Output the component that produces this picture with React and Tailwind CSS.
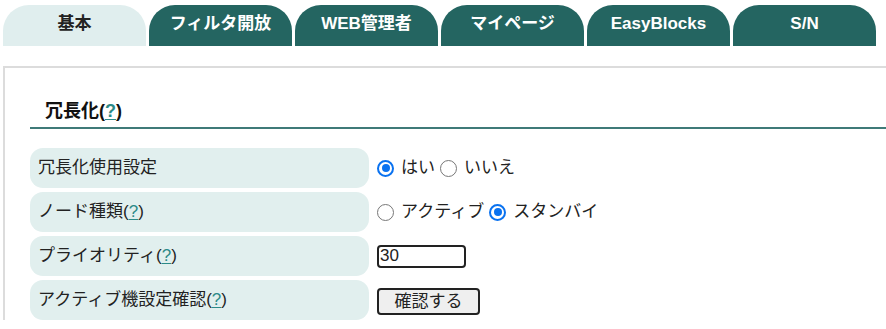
const tabs = ["基本", "フィルタ開放", "WEB管理者", "マイページ", "EasyBlocks", "S/N"];

function Help() {
  return (
    <span>
      (<a href="#" className="text-[#2b8a88] underline underline-offset-2">?</a>)
    </span>
  );
}

function Row({ label, help, children }) {
  return (
    <div className="flex items-center h-[40px]">
      <div className="w-[339px] h-full rounded-[13px] bg-[#e1efee] flex items-center pl-[8px] text-[17px] text-[#222]">
        {label}
        {help && <Help />}
      </div>
      <div className="ml-[8px] flex items-center text-[17px] text-[#222]">{children}</div>
    </div>
  );
}

function Radio({ checked, label }) {
  return (
    <label className="flex items-center">
      <span
        className={
          "w-[17px] h-[17px] rounded-full mr-[7px] flex items-center justify-center " +
          (checked ? "border-[2.5px] border-[#0a72f0]" : "border-[1.5px] border-[#777]")
        }
      >
        {checked && <span className="w-[8px] h-[8px] rounded-full bg-[#0a72f0]" />}
      </span>
      <span className="mr-[5px]">{label}</span>
    </label>
  );
}

export default function App() {
  return (
    <div className="w-[886px] h-[329px] bg-white overflow-hidden" style={{ fontFamily: '"Liberation Sans", "Noto Sans CJK JP", sans-serif' }}>
      <div className="flex gap-[3px] pl-[3px] pt-[5px]">
        {tabs.map((t, i) => (
          <div
            key={t}
            className={
              "w-[143px] h-[41px] rounded-t-[26px] flex items-center justify-center pb-[3px] text-[17px] font-bold " +
              (i === 0 ? "bg-[#e0eeee] text-[#222]" : "bg-[#246561] text-white")
            }
          >
            {t}
          </div>
        ))}
      </div>

      <div className="mt-[20px] ml-[3px] border-l-2 border-t-2 border-[#dcdcdc] pl-[25px]">
        <div className="mt-[31px] border-b-2 border-[#3f7a78] pl-[15px] pb-[4px] text-[18px] font-bold text-[#111] leading-[24px]">
          冗長化<Help />
        </div>

        <div className="mt-[19px] flex flex-col gap-[4px]">
          <Row label="冗長化使用設定">
            <Radio checked label="はい" />
            <Radio label="いいえ" />
          </Row>
          <Row label="ノード種類" help>
            <Radio label="アクティブ" />
            <Radio checked label="スタンバイ" />
          </Row>
          <Row label="プライオリティ" help>
            <input
              type="text"
              defaultValue="30"
              className="w-[89px] h-[23px] border-2 border-[#222] rounded-[4px] px-[1px] text-[17px] leading-none outline-none"
            />
          </Row>
          <Row label="アクティブ機設定確認" help>
            <button className="w-[103px] h-[27px] mt-[2px] border-2 border-[#222] rounded-[4px] bg-[#efefef] text-[17px] text-[#222] leading-none">
              確認する
            </button>
          </Row>
        </div>
      </div>
    </div>
  );
}
